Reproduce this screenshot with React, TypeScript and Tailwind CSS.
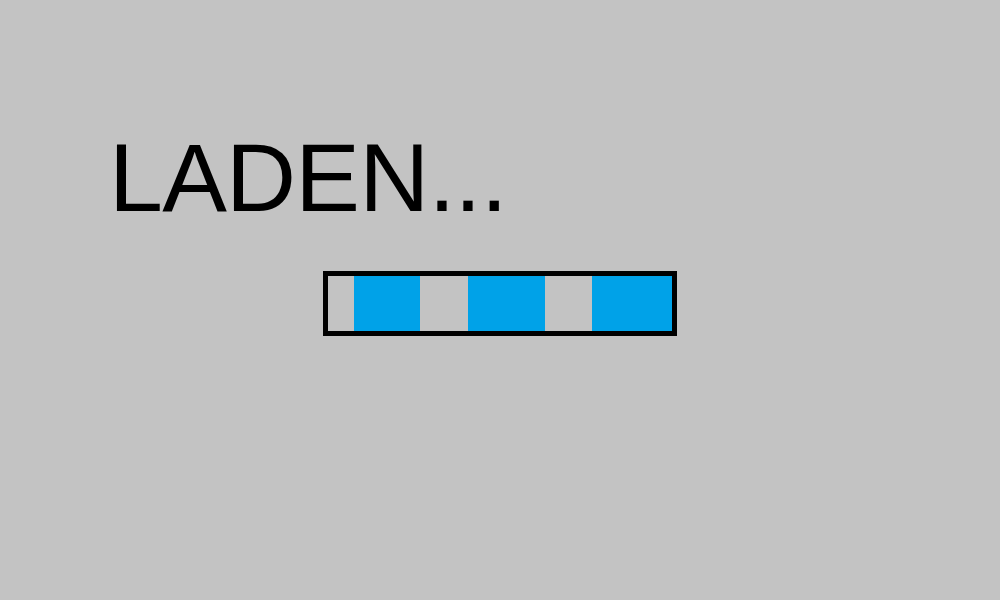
import React from "react";

const segments = [
  { w: 26, on: false },
  { w: 66, on: true },
  { w: 48, on: false },
  { w: 77, on: true },
  { w: 47, on: false },
  { w: 80, on: true },
];

const App: React.FC = () => {
  return (
    <div className="w-[1000px] h-[600px] bg-[#c3c3c3] flex flex-col pt-[129px] pl-[109px]">
      {/* Loading label */}
      <h1 className="text-[97px] leading-none tracking-[-0.8px] text-black font-['Liberation_Sans']">
        LADEN...
      </h1>

      {/* Progress bar */}
      <div className="mt-[45px] ml-[214px] w-[354px] h-[65px] border-[5px] border-black flex">
        {segments.map((s, i) => (
          <div
            key={i}
            className={s.on ? "h-full bg-[#00a2e8]" : "h-full"}
            style={{ width: s.w }}
          />
        ))}
      </div>
    </div>
  );
};

export default App;
